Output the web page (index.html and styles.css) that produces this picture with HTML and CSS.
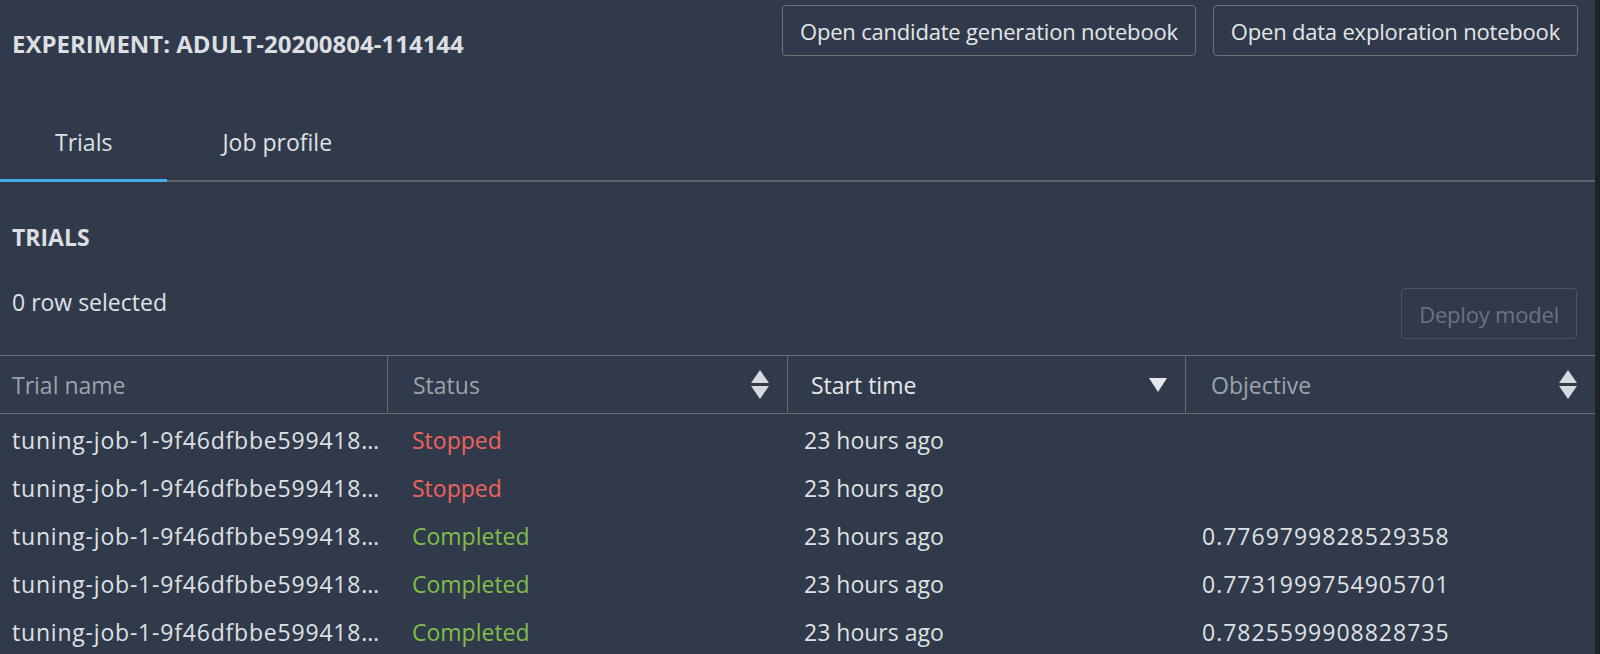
FILE: index.html
```html
<!DOCTYPE html>
<html lang="en">
<head>
	<meta charset="utf-8">
	<title>Experiment: adult-20200804-114144</title>
	<link rel="stylesheet" href="styles.css">
</head>
<body>
	<div class="panel">
		<div class="header">
			<h1 class="title">EXPERIMENT: ADULT-20200804-114144</h1>
			<div class="actions">
				<a class="button">Open candidate generation notebook</a>
				<a class="button">Open data exploration notebook</a>
			</div>
		</div>
		<div class="tabs">
			<a class="tab active">Trials</a>
			<a class="tab">Job profile</a>
		</div>
		<h2 class="section">TRIALS</h2>
		<div class="toolbar">
			<span class="count">0 row selected</span>
			<a class="button disabled">Deploy model</a>
		</div>
		<div class="grid">
			<div class="th c1">Trial name</div>
			<div class="th c2">Status
				<svg class="sort" viewBox="0 0 18 30"><path d="M0 13L9 0L18 13Z M0 16L18 16L9 29Z"/></svg>
			</div>
			<div class="th c3 sorted">Start time
				<svg class="sort" viewBox="0 0 18 30"><path d="M0 8L18 8L9 22Z"/></svg>
			</div>
			<div class="th c4">Objective
				<svg class="sort" viewBox="0 0 18 30"><path d="M0 13L9 0L18 13Z M0 16L18 16L9 29Z"/></svg>
			</div>

			<div class="td c1">tuning-job-1-9f46dfbbe599418…</div>
			<div class="td c2 stopped">Stopped</div>
			<div class="td c3">23 hours ago</div>
			<div class="td c4"></div>

			<div class="td c1">tuning-job-1-9f46dfbbe599418…</div>
			<div class="td c2 stopped">Stopped</div>
			<div class="td c3">23 hours ago</div>
			<div class="td c4"></div>

			<div class="td c1">tuning-job-1-9f46dfbbe599418…</div>
			<div class="td c2 completed">Completed</div>
			<div class="td c3">23 hours ago</div>
			<div class="td c4">0.7769799828529358</div>

			<div class="td c1">tuning-job-1-9f46dfbbe599418…</div>
			<div class="td c2 completed">Completed</div>
			<div class="td c3">23 hours ago</div>
			<div class="td c4">0.7731999754905701</div>

			<div class="td c1">tuning-job-1-9f46dfbbe599418…</div>
			<div class="td c2 completed">Completed</div>
			<div class="td c3">23 hours ago</div>
			<div class="td c4">0.7825599908828735</div>
		</div>
	</div>
</body>
</html>
```

FILE: styles.css
```css
html,body{margin:0;padding:0;height:100%;}
body{background-color:#1e2227;font-family:"Open Sans",sans-serif;font-size:23px;color:#dfe1e5;overflow:hidden;}
h1,h2{margin:0;}

.panel{width:1595px;height:654px;background-color:#313a4a;overflow:hidden;}

.header{display:flex;justify-content:space-between;align-items:flex-start;padding:5px 17px 0 12px;}
.title{font-size:24px;font-weight:700;line-height:28px;margin-top:25px;color:#dcdee2;}
.actions{display:flex;gap:17px;}
.button{display:flex;align-items:center;height:51px;box-sizing:border-box;padding:0 17px;border:1.5px solid #6e7075;border-radius:4px;color:#e4e6e9;font-size:22px;letter-spacing:-0.2px;line-height:28px;cursor:pointer;}
.button.disabled{border-color:#4b5361;color:#6a7381;cursor:not-allowed;}

.tabs{display:flex;margin-top:52px;border-bottom:2px solid #5f6266;}
.tab{padding:18px 55px 23px;line-height:28px;border-bottom:3px solid transparent;margin-bottom:-2px;color:#dfe1e5;cursor:pointer;}
.tab.active{border-bottom-color:#44aee6;}

.section{font-size:23px;font-weight:700;line-height:28px;margin:41px 0 0 12px;color:#dcdee2;}
.toolbar{display:flex;justify-content:space-between;align-items:flex-start;margin-top:37px;padding:0 18px 0 12px;}
.count{line-height:28px;}

.grid{display:grid;grid-template-columns:387px 400px 398px 1fr;margin-top:16px;border-top:1.5px solid #6b6b6b;}
.th{display:flex;align-items:center;justify-content:space-between;height:57px;padding:0 18px 0 25px;color:#9ca3ab;border-bottom:1.5px solid #6b6b6b;border-left:1.5px solid #6b6b6b;}
.th.c1{border-left:0;padding-left:12px;}
.th.c3{padding-left:23px;}
.th.c4{padding-left:25px;}
.th.sorted{color:#e6e8eb;}
.sort{width:18px;height:30px;fill:#d6d9de;}
.sorted .sort{fill:#e6e8eb;}

.td{height:48px;box-sizing:border-box;padding:4px 0 0 25px;line-height:44px;white-space:nowrap;overflow:hidden;text-overflow:ellipsis;}
.td.c1{padding-left:12px;padding-right:0;letter-spacing:0.8px;}
.td.c3{padding-left:17px;}
.td.c4{padding-left:17px;letter-spacing:1px;}
.stopped{color:#ef635b;}
.completed{color:#7fbf48;}
```
